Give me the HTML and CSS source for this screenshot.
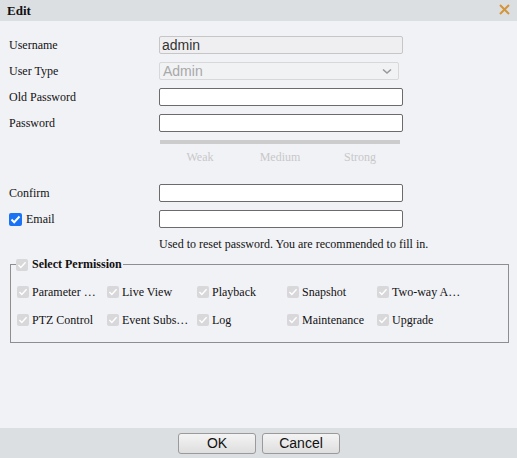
FILE: index.html
```html
<!DOCTYPE html>
<html lang="en">

<head>
    <meta charset="UTF-8">
    <meta name="viewport" content="width=device-width, initial-scale=1.0">
    <title>Edit</title>
    <link rel="stylesheet" href="styles.css">
</head>

<body>
    <div class="dlg">
        <div class="dlg-title">
            <span>Edit</span>
            <a href="javascript:;" class="dlg-close">
                <svg width="11" height="11" viewBox="0 0 11 11"><path d="M1 1L10 10M10 1L1 10" stroke="#d4943a" stroke-width="2" /></svg>
            </a>
        </div>
        <div class="dlg-body">
            <div class="row">
                <label class="row-label">Username</label>
                <input type="text" class="ipt ipt-readonly" value="admin" readonly>
            </div>
            <div class="row">
                <label class="row-label">User Type</label>
                <div class="ipt sel-disabled">
                    <span>Admin</span>
                    <svg width="10" height="7" viewBox="0 0 10 7"><path d="M1 1.5L5 5L9 1.5" stroke="#999" stroke-width="1.6" fill="none" /></svg>
                </div>
            </div>
            <div class="row">
                <label class="row-label">Old Password</label>
                <input type="password" class="ipt">
            </div>
            <div class="row">
                <label class="row-label">Password</label>
                <input type="password" class="ipt">
            </div>
            <div class="strength">
                <div class="strength-bar"></div>
                <div class="strength-text">
                    <span>Weak</span>
                    <span>Medium</span>
                    <span>Strong</span>
                </div>
            </div>
            <div class="row">
                <label class="row-label">Confirm</label>
                <input type="password" class="ipt">
            </div>
            <div class="row">
                <label class="row-label"><span class="chk chk-on"><svg width="11" height="9" viewBox="0 0 11 9"><path d="M1.5 4.5L4.2 7.2L9.5 1.5" stroke="#fff" stroke-width="2" fill="none" /></svg></span>Email</label>
                <input type="text" class="ipt">
            </div>
            <div class="hint">Used to reset password. You are recommended to fill in.</div>

            <fieldset class="perm">
                <legend><span class="chk chk-off"><svg width="10" height="8" viewBox="0 0 11 9"><path d="M1.5 4.5L4.2 7.2L9.5 1.5" stroke="#fff" stroke-width="1.6" fill="none" /></svg></span>Select Permission</legend>
                <div class="perm-grid">
                    <div class="perm-item"><span class="chk chk-off"><svg width="10" height="8" viewBox="0 0 11 9"><path d="M1.5 4.5L4.2 7.2L9.5 1.5" stroke="#fff" stroke-width="1.6" fill="none" /></svg></span>Parameter …</div>
                    <div class="perm-item"><span class="chk chk-off"><svg width="10" height="8" viewBox="0 0 11 9"><path d="M1.5 4.5L4.2 7.2L9.5 1.5" stroke="#fff" stroke-width="1.6" fill="none" /></svg></span>Live View</div>
                    <div class="perm-item"><span class="chk chk-off"><svg width="10" height="8" viewBox="0 0 11 9"><path d="M1.5 4.5L4.2 7.2L9.5 1.5" stroke="#fff" stroke-width="1.6" fill="none" /></svg></span>Playback</div>
                    <div class="perm-item"><span class="chk chk-off"><svg width="10" height="8" viewBox="0 0 11 9"><path d="M1.5 4.5L4.2 7.2L9.5 1.5" stroke="#fff" stroke-width="1.6" fill="none" /></svg></span>Snapshot</div>
                    <div class="perm-item"><span class="chk chk-off"><svg width="10" height="8" viewBox="0 0 11 9"><path d="M1.5 4.5L4.2 7.2L9.5 1.5" stroke="#fff" stroke-width="1.6" fill="none" /></svg></span>Two-way A…</div>
                    <div class="perm-item"><span class="chk chk-off"><svg width="10" height="8" viewBox="0 0 11 9"><path d="M1.5 4.5L4.2 7.2L9.5 1.5" stroke="#fff" stroke-width="1.6" fill="none" /></svg></span>PTZ Control</div>
                    <div class="perm-item"><span class="chk chk-off"><svg width="10" height="8" viewBox="0 0 11 9"><path d="M1.5 4.5L4.2 7.2L9.5 1.5" stroke="#fff" stroke-width="1.6" fill="none" /></svg></span>Event Subs…</div>
                    <div class="perm-item"><span class="chk chk-off"><svg width="10" height="8" viewBox="0 0 11 9"><path d="M1.5 4.5L4.2 7.2L9.5 1.5" stroke="#fff" stroke-width="1.6" fill="none" /></svg></span>Log</div>
                    <div class="perm-item"><span class="chk chk-off"><svg width="10" height="8" viewBox="0 0 11 9"><path d="M1.5 4.5L4.2 7.2L9.5 1.5" stroke="#fff" stroke-width="1.6" fill="none" /></svg></span>Maintenance</div>
                    <div class="perm-item"><span class="chk chk-off"><svg width="10" height="8" viewBox="0 0 11 9"><path d="M1.5 4.5L4.2 7.2L9.5 1.5" stroke="#fff" stroke-width="1.6" fill="none" /></svg></span>Upgrade</div>
                </div>
            </fieldset>
        </div>
        <div class="dlg-foot">
            <a href="javascript:;" class="btn">OK</a>
            <a href="javascript:;" class="btn">Cancel</a>
        </div>
    </div>
</body>

</html>
```

FILE: styles.css
```css
html,
body {
    margin: 0px;
    padding: 0px;
    height: 100%;
}

body {
    font-family: "Liberation Serif", "DejaVu Serif", serif;
    font-size: 12px;
    color: #111;
    background: #f1f2f6;
}

a {
    text-decoration: none;
    color: #000;
}

.dlg {
    display: flex;
    flex-direction: column;
    height: 100%;
}

.dlg-title {
    height: 21px;
    background: #dcdfe2;
    display: flex;
    align-items: center;
    justify-content: space-between;
    padding: 0px 7px 0px 7px;
    font-weight: bold;
    font-size: 13px;
}

.dlg-close {
    display: flex;
    margin-top: -2px;
}

.dlg-body {
    flex: 1;
    padding: 15px 9px 0px 9px;
}

.row {
    display: flex;
    align-items: center;
    height: 18px;
    margin-bottom: 8px;
}

.row-label {
    width: 150px;
    display: flex;
    align-items: center;
}

.ipt {
    box-sizing: border-box;
    width: 244px;
    height: 18px;
    margin: 0px;
    border: 1px solid #6b6b6b;
    border-radius: 2px;
    background: #fff;
    padding: 0px 2px;
    font-family: "Liberation Sans", Arial, sans-serif;
    font-size: 14px;
    outline: none;
}

.ipt-readonly {
    background: #efeff1;
    border-color: #c6c6c6;
    color: #333;
}

.sel-disabled {
    display: flex;
    align-items: center;
    justify-content: space-between;
    border-color: #d8d8d8;
    background: #f1f2f4;
    color: #a8a8a8;
    padding: 0px 6px 0px 3px;
    width: 240px;
}

.strength {
    margin: 0px 0px 0px 151px;
    width: 240px;
    height: 44px;
}

.strength-bar {
    height: 4px;
    background: #cccccc;
}

.strength-text {
    display: flex;
    margin-top: 6px;
    color: #c8c8c8;
}

.strength-text span {
    flex: 1;
    text-align: center;
}

.hint {
    margin: 0px 0px 0px 150px;
    line-height: 16px;
}

.chk {
    box-sizing: border-box;
    display: inline-flex;
    align-items: center;
    justify-content: center;
    width: 12px;
    height: 12px;
    border-radius: 2px;
    margin-right: 3px;
    flex-shrink: 0;
}

.chk-on {
    width: 13px;
    height: 13px;
    background: #1a73f5;
    margin-right: 4px;
}

.chk-off {
    background: #d8d8da;
}

.perm {
    margin: 5px 0px 0px 1px;
    padding: 11px 6px 13px 6px;
    border: 1px solid #8e8e8e;
    border-radius: 0px;
    width: 499px;
    box-sizing: border-box;
}

.perm legend {
    display: flex;
    align-items: center;
    padding: 0px 1px 0px 0px;
    margin-left: -1px;
    font-weight: bold;
}

.perm legend .chk {
    margin-right: 4px;
}

.perm-grid {
    display: grid;
    grid-template-columns: repeat(5, 90px);
    row-gap: 10px;
}

.perm-item {
    display: flex;
    align-items: center;
    height: 18px;
    white-space: nowrap;
}

.dlg-foot {
    height: 30px;
    background: #dcdfe2;
    display: flex;
    justify-content: center;
    align-items: center;
    gap: 6px;
    padding-left: 1px;
}

.btn {
    box-sizing: border-box;
    width: 78px;
    height: 21px;
    line-height: 19px;
    text-align: center;
    border: 1px solid #9a9a9a;
    border-radius: 3px;
    background: linear-gradient(#f4f4f4, #dedede);
    font-family: "Liberation Sans", Arial, sans-serif;
    font-size: 14px;
    color: #111;
}
```
